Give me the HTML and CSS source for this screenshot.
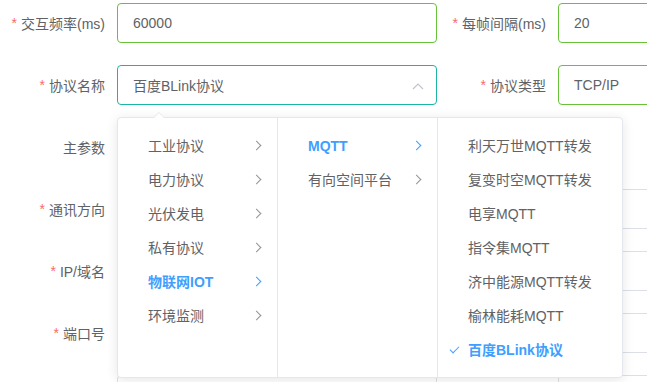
FILE: index.html
```html
<!DOCTYPE html>
<html lang="zh-CN">
<head>
    <meta charset="UTF-8">
    <meta name="viewport" content="width=device-width, initial-scale=1.0">
    <title>协议配置</title>
    <link rel="stylesheet" href="styles.css">
</head>
<body>

    <!-- 表单区域 -->
    <div class="form">
        <div class="row">
            <label class="lbl req">交互频率(ms)</label>
            <div class="input ok">60000</div>
            <label class="lbl req">每帧间隔(ms)</label>
            <div class="input ok">20</div>
        </div>
        <div class="row">
            <label class="lbl req">协议名称</label>
            <div class="input focus select">
                百度BLink协议
                <svg class="caret" width="12" height="8" viewBox="0 0 12 8"><path d="M1 7 L6 2 L11 7" fill="none" stroke="#c0c4cc" stroke-width="1.2"/></svg>
            </div>
            <label class="lbl req">协议类型</label>
            <div class="input ok">TCP/IP</div>
        </div>
        <div class="row">
            <label class="lbl">主参数</label>
            <div></div>
            <div></div>
            <div></div>
        </div>
        <div class="row">
            <label class="lbl req">通讯方向</label>
            <div class="input"></div>
            <div></div>
            <div class="input"></div>
        </div>
        <div class="row">
            <label class="lbl req">IP/域名</label>
            <div class="input"></div>
            <div></div>
            <div class="input"></div>
        </div>
        <div class="row">
            <label class="lbl req">端口号</label>
            <div class="input"></div>
            <div></div>
            <div class="input"></div>
        </div>
        <div class="row">
            <div></div>
            <div class="input"></div>
            <div></div>
            <div class="input"></div>
        </div>
    </div>

    <!-- 级联选择下拉面板 -->
    <div class="cascader-pop">
        <span class="pop-arrow"></span>
        <ul class="menu">
            <li class="node">工业协议<i class="chev"></i></li>
            <li class="node">电力协议<i class="chev"></i></li>
            <li class="node">光伏发电<i class="chev"></i></li>
            <li class="node">私有协议<i class="chev"></i></li>
            <li class="node active">物联网IOT<i class="chev"></i></li>
            <li class="node">环境监测<i class="chev"></i></li>
        </ul>
        <ul class="menu">
            <li class="node active">MQTT<i class="chev"></i></li>
            <li class="node">有向空间平台<i class="chev"></i></li>
        </ul>
        <ul class="menu wide">
            <li class="node">利天万世MQTT转发</li>
            <li class="node">复变时空MQTT转发</li>
            <li class="node">电享MQTT</li>
            <li class="node">指令集MQTT</li>
            <li class="node">济中能源MQTT转发</li>
            <li class="node">榆林能耗MQTT</li>
            <li class="node active checked">百度BLink协议</li>
        </ul>
    </div>

</body>
</html>
```

FILE: styles.css
```css
body {
    font-family: "Liberation Sans", "Noto Sans CJK SC", sans-serif;
    font-size: 14px;
    color: #606266;
    background-color: #ffffff;
    margin: 0;
    padding: 3px 0 0 0;
    width: 647px;
    height: 382px;
    overflow: hidden;
    position: relative;
}

.form {
    width: 1000px;
}

.row {
    display: grid;
    grid-template-columns: 117px 320px 121px 320px;
    height: 40px;
    margin-bottom: 22px;
}

.lbl {
    display: flex;
    align-items: center;
    justify-content: flex-end;
    padding-right: 12px;
    color: #606266;
}

.lbl.req::before {
    content: "*";
    color: #f56c6c;
    margin-right: 4px;
}

.input {
    box-sizing: border-box;
    height: 40px;
    border: 1px solid #dcdfe6;
    border-radius: 4px;
    padding: 0 15px;
    display: flex;
    align-items: center;
    color: #606266;
    position: relative;
}

.input.ok {
    border-color: #67c23a;
}

.input.focus {
    border-color: #1cb5a4;
}

.caret {
    position: absolute;
    right: 12px;
    top: 16px;
}

.cascader-pop {
    position: absolute;
    left: 117px;
    top: 117px;
    height: 261px;
    box-sizing: border-box;
    display: flex;
    background: #ffffff;
    border: 1px solid #e4e7ed;
    border-radius: 4px;
    box-shadow: 0 2px 12px rgba(0, 0, 0, 0.1);
}

.pop-arrow {
    position: absolute;
    left: 35px;
    top: -6px;
    width: 0;
    height: 0;
    border-left: 6px solid transparent;
    border-right: 6px solid transparent;
    border-bottom: 6px solid #e4e7ed;
}

.pop-arrow::after {
    content: "";
    position: absolute;
    left: -6px;
    top: 1px;
    border-left: 6px solid transparent;
    border-right: 6px solid transparent;
    border-bottom: 6px solid #ffffff;
}

.menu {
    list-style-type: none;
    margin: 0;
    padding: 11px 0;
    width: 160px;
    box-sizing: border-box;
    border-right: 1px solid #e4e7ed;
}

.menu.wide {
    width: 184px;
    border-right: none;
}

.node {
    position: relative;
    height: 34px;
    line-height: 34px;
    padding: 0 30px 0 30px;
    white-space: nowrap;
    color: #606266;
}

.node.active {
    color: #409eff;
    font-weight: bold;
}

.chev {
    position: absolute;
    right: 17px;
    top: 13px;
    width: 6px;
    height: 6px;
    border-top: 1px solid #909399;
    border-right: 1px solid #909399;
    transform: rotate(45deg);
}

.node.active .chev {
    border-color: #409eff;
}

.node.checked::before {
    content: "";
    position: absolute;
    left: 14px;
    top: 11px;
    width: 4px;
    height: 8px;
    border-right: 1px solid #409eff;
    border-bottom: 1px solid #409eff;
    transform: rotate(45deg);
}
```
